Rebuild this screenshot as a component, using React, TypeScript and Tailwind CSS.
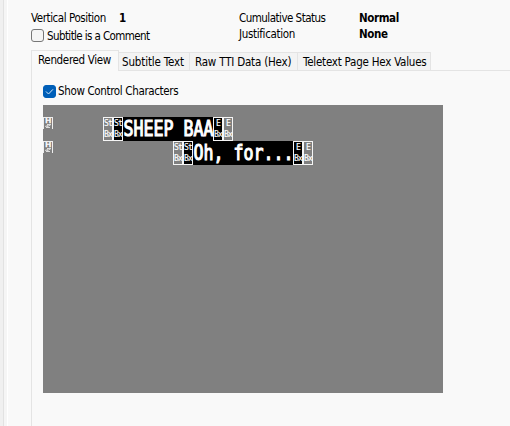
import type { ReactNode } from 'react';

function Label({ children, className = '' }: { children: ReactNode; className?: string }) {
  return <span className={`block h-4 whitespace-nowrap leading-4 ${className}`}>{children}</span>;
}

function Check({ checked = false }: { checked?: boolean }) {
  return (
    <span className={`flex h-[13px] w-[13px] shrink-0 items-center justify-center rounded-[3px] border ${checked ? 'border-[#005fb8] bg-[#005fb8]' : 'border-[#777777] bg-[#f5f5f5]'}`}>
      {checked && (
        <svg width="9" height="9" viewBox="0 0 9 9" fill="none" stroke="#d5e8f8" strokeWidth="1">
          <path d="M1 4.5 3.5 7 8 2.3" />
        </svg>
      )}
    </span>
  );
}

function Control({ top, bottom, dark = false }: { top: string; bottom: string; dark?: boolean }) {
  return (
    <span className={`flex h-6 w-[10px] shrink-0 flex-col items-center overflow-hidden border border-[#f5f5f5] text-white ${dark ? 'bg-black' : 'bg-[#808080]'}`}>
      <span className="block h-[11px] origin-center scale-y-[1.17] text-[8px] leading-[11px] tracking-[-0.7px] [-webkit-text-stroke:0.15px_white]">{top}</span>
      <span className="block h-[11px] origin-center -translate-y-[0.4px] scale-y-[1.17] text-[8px] leading-[11px] tracking-[-0.7px] [-webkit-text-stroke:0.15px_white]">{bottom}</span>
    </span>
  );
}

function NewLine() {
  return (
    <span className="flex h-3 w-[10px] shrink-0 flex-col items-center overflow-hidden border border-b-0 border-[#eeeeee] text-white">
      <span className="block h-[5px] scale-x-[1.4] text-[7px] leading-[6px] [-webkit-text-stroke:0.3px_white]">H</span>
      <svg width="8" height="6" viewBox="0 0 8 6" fill="none" stroke="#dddddd">
        <path d="M3 1.5H7L2 4.5H6M1 3.5 4 2.5" />
      </svg>
    </span>
  );
}

function Teletext({ text, pad }: { text: string; pad: string }) {
  return (
    <div className="flex h-6 items-start">
      <NewLine />
      <div className={`flex ${pad}`}>
        <Control top="St" bottom="Bx" />
        <Control top="St" bottom="Bx" dark />
        <span className="flex h-6 bg-black text-white">
          <span className="block origin-center translate-x-[0.5px] translate-y-[0.4px] scale-y-[1.32] whitespace-pre text-[16.61px] leading-6 [-webkit-text-stroke:0.9px_white]">{text}</span>
        </span>
        <Control top="E" bottom="Bx" dark />
        <Control top="E" bottom="Bx" />
      </div>
    </div>
  );
}

export default function App() {
  return (
    <div className="flex h-[426px] w-[510px] overflow-hidden bg-[#f9f9f9] font-['DejaVu_Sans_Condensed','DejaVu_Sans',sans-serif] text-[11.5px] text-black [font-stretch:condensed]">
      <div className="w-1 shrink-0 border-r border-[#e2e2e2] bg-[#f0f0f0]" />
      <div className="w-1 shrink-0 border-r border-white bg-[#f5f5f5]" />
      <main className="min-w-0 flex-1 pl-[23px] pt-[10px]">
        <div className="flex h-10">
          <div className="w-[208px]">
            <div className="flex">
              <Label className="w-[88px] tracking-[-0.43px]">Vertical Position</Label>
              <Label className="font-bold">1</Label>
            </div>
            <div className="flex h-[19px] items-center gap-[3px]">
              <Check />
              <Label className="tracking-[-0.6px]">Subtitle is a Comment</Label>
            </div>
          </div>
          <div className="w-[120px]">
            <Label className="tracking-[-0.52px]">Cumulative Status</Label>
            <Label className="tracking-[-0.33px]">Justification</Label>
          </div>
          <div className="font-bold tracking-[-0.4px]">
            <Label>Normal</Label>
            <Label>None</Label>
          </div>
        </div>
        <div className="flex h-[21px] items-end">
          <div className="h-[21px] w-[88px] border border-b-0 border-[#e4e4e4] pl-[6px] pt-px">
            <Label className="tracking-[-0.33px]">Rendered View</Label>
          </div>
          <div className="h-[19px] w-[71px] border-b border-r border-t border-[#e4e4e4] bg-[#f3f3f3] pl-[3px] pt-px">
            <Label className="tracking-[-0.15px]">Subtitle Text</Label>
          </div>
          <div className="h-[19px] w-[108px] border-b border-r border-t border-[#e4e4e4] bg-[#f3f3f3] pl-[5px] pt-px">
            <Label className="tracking-[-0.2px]">Raw TTI Data (Hex)</Label>
          </div>
          <div className="h-[19px] w-[133px] border-b border-r border-t border-[#e4e4e4] bg-[#f3f3f3] pl-[5px] pt-px">
            <Label className="tracking-[-0.23px]">Teletext Page Hex Values</Label>
          </div>
          <div className="h-px flex-1 bg-[#e4e4e4]" />
        </div>
        <section className="h-[355px] border-l border-[#e4e4e4] pl-[11px] pt-[12px]">
          <div className="flex h-4 items-center gap-[2px]">
            <Check checked />
            <Label className="tracking-[-0.35px]">Show Control Characters</Label>
          </div>
          <div className="mt-[6px] h-[288px] w-[400px] bg-[#808080] pt-3 font-['DejaVu_Sans_Mono',monospace]">
            <Teletext text="SHEEP BAA" pad="ml-[50px]" />
            <Teletext text="Oh, for..." pad="ml-[120px]" />
          </div>
        </section>
      </main>
    </div>
  );
}
